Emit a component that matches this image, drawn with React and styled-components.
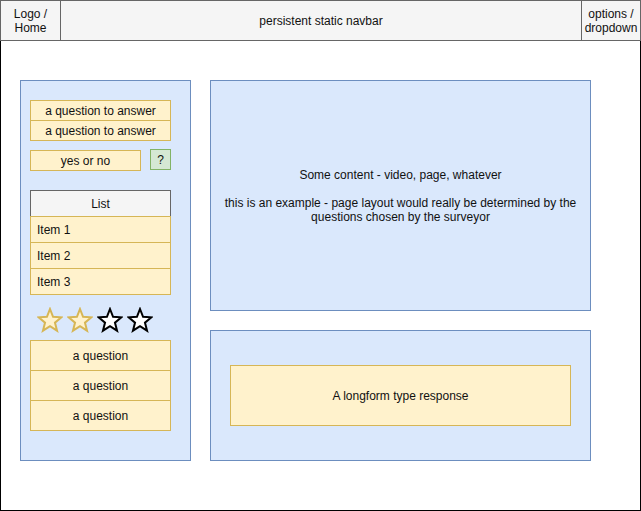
import React from "react";
import styled, { createGlobalStyle } from "styled-components";

const GlobalStyle = createGlobalStyle`
    * { box-sizing: border-box; }
    body {
        margin: 0;
        background: #fff;
        font-family: "Liberation Sans", Arial, sans-serif;
        font-size: 12px;
        color: #111;
    }
`;

const Page = styled.div`
    width: 641px;
    height: 511px;
    display: flex;
    flex-direction: column;
`;

const Navbar = styled.div`
    height: 41px;
    display: flex;
    border: 1px solid #666;
    background: #f5f5f5;
`;

const NavCell = styled.div`
    width: ${props => (props.$grow ? "auto" : "59px")};
    flex: ${props => (props.$grow ? 1 : "none")};
    display: flex;
    align-items: center;
    justify-content: center;
    text-align: center;
    line-height: 14px;
    border-left: ${props => (props.$divider ? "1px solid #666" : "none")};
`;

const Frame = styled.div`
    flex: 1;
    display: flex;
    gap: 19px;
    padding: 39px 0 0 19px;
    border: 1px solid #000;
    border-top: none;
`;

const SidePanel = styled.div`
    width: 171px;
    height: 381px;
    padding: 19px 0 0 9px;
    background: #dae8fc;
    border: 1px solid #6c8ebf;
    display: flex;
    flex-direction: column;
`;

const Stack = styled.div`
    width: 141px;
    display: flex;
    flex-direction: column;
    margin-top: ${props => props.$gap || 0}px;
`;

const Field = styled.div`
    height: ${props => props.$h || 21}px;
    width: ${props => props.$w || 141}px;
    background: ${props => (props.$green ? "#d5e8d4" : "#fff2cc")};
    border: 1px solid ${props => (props.$green ? "#82b366" : "#d6b656")};
    display: flex;
    align-items: center;
    justify-content: ${props => (props.$left ? "flex-start" : "center")};
    padding-left: ${props => (props.$left ? "6px" : "0")};
    & + & {
        margin-top: -1px;
    }
`;

const Row = styled.div`
    display: flex;
    gap: 9px;
    margin-top: 9px;
`;

const ListHead = styled.div`
    height: 27px;
    background: #f5f5f5;
    border: 1px solid #666;
    display: flex;
    align-items: center;
    justify-content: center;
    margin-bottom: -1px;
`;

const Stars = styled.div`
    display: flex;
    gap: 4px;
    padding: 12px 0 7px 7px;
`;

const MainCol = styled.div`
    width: 381px;
    display: flex;
    flex-direction: column;
    gap: 19px;
`;

const Panel = styled.div`
    height: ${props => props.$h}px;
    background: #dae8fc;
    border: 1px solid #6c8ebf;
    display: flex;
    flex-direction: column;
    align-items: center;
    justify-content: center;
    text-align: center;
    line-height: 14px;
`;

const Blank = styled.div`
    height: 14px;
`;

const Longform = styled.div`
    width: 341px;
    height: 61px;
    background: #fff2cc;
    border: 1px solid #d6b656;
    display: flex;
    align-items: center;
    justify-content: center;
`;

const Star = ({ filled }) => {
    const pts = [];
    for (let i = 0; i < 10; i++) {
        const r = i % 2 === 0 ? 12 : 5.2;
        const a = -Math.PI / 2 + (i * Math.PI) / 5;
        pts.push(`${(13 + r * Math.cos(a)).toFixed(2)},${(14 + r * Math.sin(a)).toFixed(2)}`);
    }
    return (
        <svg width="26" height="26" viewBox="0 0 26 26">
            <polygon
                points={pts.join(" ")}
                fill={filled ? "#fff2cc" : "#fff"}
                stroke={filled ? "#d6b656" : "#000"}
                strokeWidth="2"
                strokeLinejoin="miter"
            />
        </svg>
    );
};

export default function App() {
    return (
        <>
            <GlobalStyle />
            <Page>
                <Navbar>
                    <NavCell>Logo /<br />Home</NavCell>
                    <NavCell $grow $divider>persistent static navbar</NavCell>
                    <NavCell $divider>options /<br />dropdown</NavCell>
                </Navbar>
                <Frame>
                    <SidePanel>
                        <Stack>
                            <Field>a question to answer</Field>
                            <Field>a question to answer</Field>
                        </Stack>
                        <Row>
                            <Field $w={111}>yes or no</Field>
                            <Field $w={21} $green>?</Field>
                        </Row>
                        <Stack $gap={19}>
                            <ListHead>List</ListHead>
                            <Field $h={27} $left>Item 1</Field>
                            <Field $h={27} $left>Item 2</Field>
                            <Field $h={27} $left>Item 3</Field>
                        </Stack>
                        <Stars>
                            <Star filled />
                            <Star filled />
                            <Star />
                            <Star />
                        </Stars>
                        <Stack>
                            <Field $h={31}>a question</Field>
                            <Field $h={31}>a question</Field>
                            <Field $h={31}>a question</Field>
                        </Stack>
                    </SidePanel>
                    <MainCol>
                        <Panel $h={231}>
                            <div>Some content - video, page, whatever</div>
                            <Blank />
                            <div>this is an example - page layout would really be determined by the</div>
                            <div>questions chosen by the surveyor</div>
                        </Panel>
                        <Panel $h={131}>
                            <Longform>A longform type response</Longform>
                        </Panel>
                    </MainCol>
                </Frame>
            </Page>
        </>
    );
}
